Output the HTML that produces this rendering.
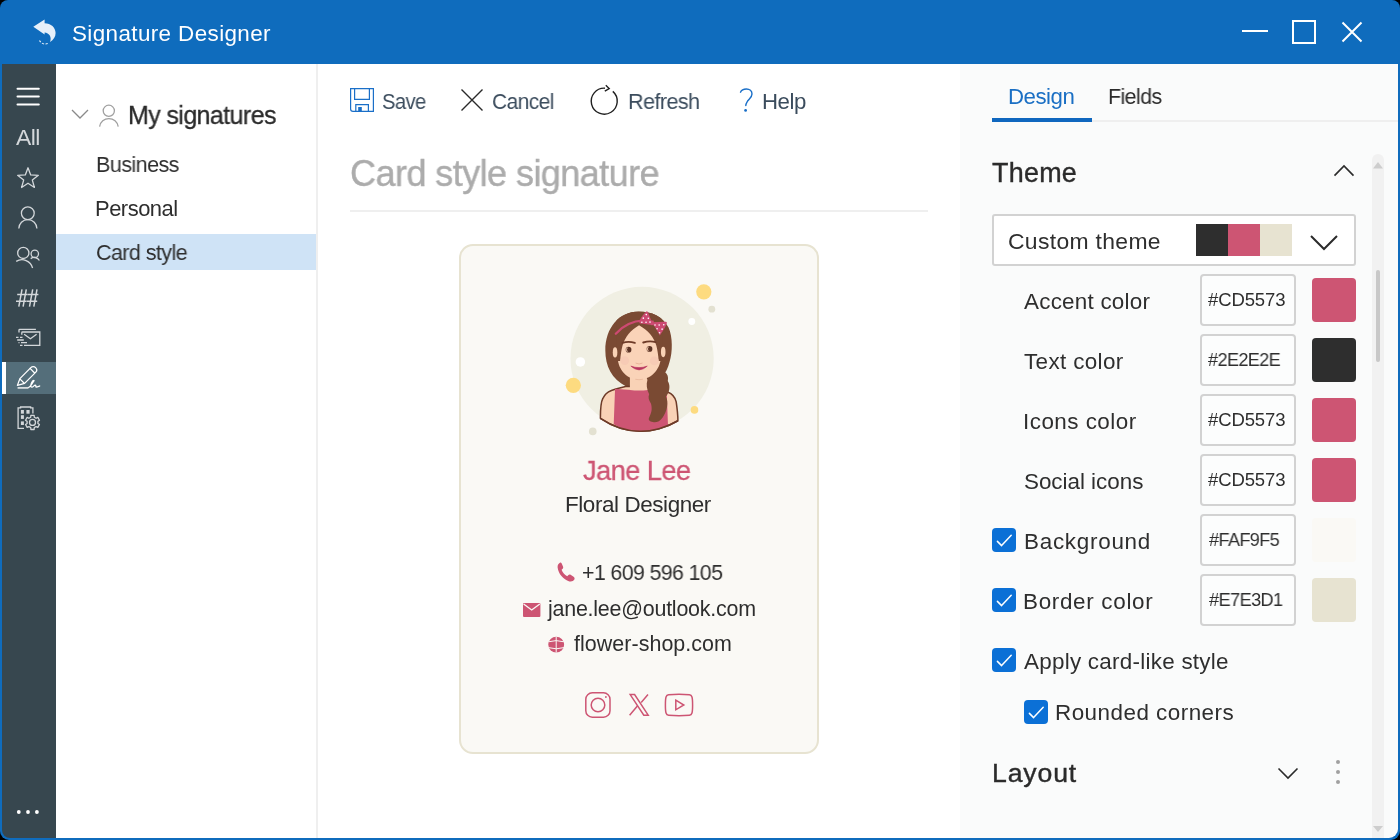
<!DOCTYPE html>
<html><head><meta charset="utf-8"><title>Signature Designer</title>
<style>
html,body{margin:0;padding:0;width:1400px;height:840px;overflow:hidden;background:#000;}
body{position:relative;font-family:"Liberation Sans",sans-serif;}
.t{position:absolute;white-space:nowrap;font-family:"Liberation Sans",sans-serif;will-change:transform;}
.a{position:absolute;}
svg{position:absolute;overflow:visible;}
</style></head><body>
<!-- window frame -->
<div class="a" style="left:0;top:0;width:1400px;height:840px;border-radius:8px 8px 9px 9px;background:#0f6cbd;overflow:hidden;">
  <div class="a" style="left:2px;top:64px;width:54px;height:774px;background:#37474f;border-bottom-left-radius:8px;"></div>
  <div class="a" style="left:56px;top:64px;width:260px;height:774px;background:#ffffff;"></div>
  <div class="a" style="left:316px;top:64px;width:2px;height:774px;background:#efefef;"></div>
  <div class="a" style="left:318px;top:64px;width:642px;height:774px;background:#ffffff;"></div>
  <div class="a" style="left:960px;top:64px;width:438px;height:774px;background:#fafbfb;border-bottom-right-radius:9px;"></div>
</div>

<!-- title bar logo -->
<svg style="left:0;top:0" width="100" height="64" viewBox="0 0 100 64">
  <path d="M33.3,26.8 L44.6,19.6 L44.6,23.2 C51,23.2 55.6,27.6 55.6,33 C55.6,36.8 53.6,39.8 50,42 C51.4,38.6 50.6,35 47.6,33.4 C46.6,32.8 45.6,32.6 44.6,32.6 L44.6,34.6 Z" fill="#e6f0fa"/>
  <path d="M39.5,40.5 A6.5,6.5 0 0 0 48.5,43.2" fill="none" stroke="#e6f0fa" stroke-width="1.1" stroke-dasharray="2.2 1.4"/>
</svg>
<!-- window controls -->
<svg style="left:1230px;top:10px" width="150" height="44" viewBox="1230 10 150 44">
  <rect x="1242" y="30" width="26" height="2" fill="#fff"/>
  <rect x="1293" y="21" width="22" height="22" fill="none" stroke="#fff" stroke-width="2"/>
  <path d="M1342.5,22.5 L1361.5,41.5 M1361.5,22.5 L1342.5,41.5" stroke="#fff" stroke-width="2" fill="none"/>
</svg>

<!-- sidebar icons -->
<div class="a" style="left:2px;top:362px;width:54px;height:32px;background:#546e7a;"></div>
<div class="a" style="left:2px;top:362px;width:4px;height:32px;background:#ffffff;"></div>
<svg style="left:0;top:64px" width="56" height="774" viewBox="0 64 56 774">
  <g stroke="#ffffff" stroke-width="2" stroke-linecap="round" fill="none">
    <path d="M17.5,88.8 H38.8 M17.5,96.6 H38.8 M17.5,104.4 H38.8"/>
  </g>
  <g stroke="#d3d7da" stroke-width="1.3" fill="none" stroke-linejoin="miter">
    <path d="M28.00,167.75 L30.69,174.95 L38.37,175.28 L32.35,180.06 L34.41,187.47 L28.00,183.23 L21.59,187.47 L23.65,180.06 L17.63,175.28 L25.31,174.95 Z" stroke-linejoin="round"/>
    <circle cx="27.8" cy="213.3" r="6.4"/>
    <path d="M18.8,228.6 A9.05,9.05 0 0 1 36.9,228.6"/>
    <circle cx="23.3" cy="252.9" r="5.6"/>
    <circle cx="34.8" cy="253.8" r="3.7"/>
    <path d="M16.2,261.4 A11,11 0 0 1 32.6,268"/>
    <path d="M30.7,258.6 A6,6 0 0 1 39.4,260.5"/>
  </g>
  <g stroke="#d3d7da" stroke-width="1.5" fill="none">
    <path d="M22,289.3 L18.8,306.7 M26.3,289.3 L23.1,306.7 M17.2,294.6 H27.7 M16,301.3 H26.5"/>
    <path d="M32.5,289.3 L29.3,306.7 M36.8,289.3 L33.6,306.7 M27.7,294.6 H38.2 M26.5,301.3 H37" transform="translate(0.2,0)"/>
  </g>
  <g stroke="#d3d7da" stroke-width="1.3" fill="none">
    <path d="M19,332.5 V330 Q19,329.3 19.8,329.3 H35.9"/>
    <path d="M21.8,334.8 V332.8 Q21.8,332 22.6,332 H39.8 V345.4 H24"/>
    <path d="M24.1,334.3 L30.4,338.8 L36.6,334.3"/>
    <path d="M16,337.4 H18.5 M20,337.4 H22.5 M17.2,340 H23.8 M18.5,342.6 H19.5 M21,342.6 H27 M20,345.4 H22.5"/>
  </g>
  <g stroke="#ffffff" stroke-width="1.3" fill="none" stroke-linejoin="round" stroke-linecap="round">
    <path d="M17.4,385.4 L19.9,378.6 L30.8,367.6 A3.39,3.39 0 0 1 35.6,372.4 L24.6,383.4 Z"/>
    <path d="M20.1,379.1 L24,383 M30.1,368.4 L34.4,372.7"/>
    <path d="M28.3,387.6 C30,387.4 31,385.5 32.2,383.5 C33.2,381.8 34.6,380.4 33.8,380.4 C32.4,380.4 30.6,384 30.8,386 C31,387.6 32.4,387.4 33.4,386.4 C34.2,385.6 35,384.8 35.6,385.2 C36,385.6 35.6,387 36.2,387 C37,387 38.6,386.4 39.7,386"/>
  </g>
  <path d="M17.6,387.9 H28.3" stroke="#dfe3e5" stroke-width="1.7"/>
  <g stroke="#d3d7da" stroke-width="1.3" fill="none">
    <path d="M24,428.4 H18.1 V407.9 H20.6 V407 H30.6 V407.9 H32.9 V413.5"/>
    <circle cx="32.5" cy="422.4" r="3"/>
    <path d="M30.71,417.20 L30.86,415.29 L34.14,415.29 L34.29,417.20 L36.11,418.25 L37.84,417.42 L39.48,420.27 L37.90,421.35 L37.90,423.45 L39.48,424.53 L37.84,427.38 L36.11,426.55 L34.29,427.60 L34.14,429.51 L30.86,429.51 L30.71,427.60 L28.89,426.55 L27.16,427.38 L25.52,424.53 L27.10,423.45 L27.10,421.35 L25.52,420.27 L27.16,417.42 L28.89,418.25 Z" stroke-linejoin="round"/>
  </g>
  <g fill="#d3d7da">
    <rect x="20.9" y="410" width="3" height="3.7"/><rect x="26.4" y="410" width="3.2" height="3.7"/>
    <rect x="20.9" y="415.2" width="3" height="3.7"/><rect x="20.9" y="421.4" width="3" height="3.6"/>
  </g>
  <g fill="#ffffff">
    <circle cx="18.8" cy="812" r="1.9"/><circle cx="28" cy="812" r="1.9"/><circle cx="36.9" cy="812" r="1.9"/>
  </g>
</svg>

<!-- tree -->
<div class="a" style="left:56px;top:234px;width:260px;height:36px;background:#cfe3f6;"></div>
<svg style="left:60px;top:95px" width="70" height="40" viewBox="60 95 70 40">
  <path d="M72,110 L80,118 L88,110" stroke="#8a8a8a" stroke-width="1.3" fill="none"/>
  <circle cx="108.8" cy="110.8" r="5.6" stroke="#a0a0a0" stroke-width="1.3" fill="none"/>
  <path d="M99.6,126.6 A9.4,9.4 0 0 1 118.2,126.6" stroke="#a0a0a0" stroke-width="1.3" fill="none"/>
</svg>

<!-- toolbar icons -->
<svg style="left:340px;top:80px" width="480" height="40" viewBox="340 80 480 40">
  <g stroke="#1a6fc8" stroke-width="1.2" fill="none">
    <path d="M350.6,88.6 H373.4 V111.4 H353 Q350.6,111.4 350.6,109 Z"/>
    <path d="M354.6,88.6 V99.4 H369.4 V88.6"/>
    <path d="M355.8,111.4 V104.6 H368.4 V111.4"/>
  </g>
  <rect x="358.2" y="107" width="3.6" height="4.6" fill="#1a6fc8"/>
  <path d="M461.5,89.5 L482.5,110.5 M482.5,89.5 L461.5,110.5" stroke="#2a2a2a" stroke-width="1.4" fill="none"/>
  <path d="M612.8,91.4 A13,13 0 1 1 605,88.2" stroke="#1f1f1f" stroke-width="1.4" fill="none"/>
  <path d="M605.8,85.2 L609.2,88.6 L604.8,91.2" stroke="#1f1f1f" stroke-width="1.4" fill="none"/>
  <path d="M740.5,92.2 C741.6,89.6 744,89 746.4,89 C749.6,89 752,91 752,94 C752,97.2 749.2,98.6 747.6,101 C746.6,102.6 745.8,103.6 745.8,105.6" stroke="#1a6fc8" stroke-width="1.4" fill="none" stroke-linecap="round"/>
  <circle cx="745.6" cy="110.4" r="1.4" fill="#1a6fc8"/>
</svg>

<!-- heading separator -->
<div class="a" style="left:350px;top:210px;width:578px;height:2px;background:#efefef;"></div>

<!-- card -->
<div class="a" style="left:459px;top:244px;width:356px;height:506px;border:2px solid #e7e3d1;border-radius:14px;background:#faf9f5;"></div>

<!-- avatar -->
<svg style="left:560px;top:280px" width="160" height="160" viewBox="0 0 840 840">
  <defs><clipPath id="hc"><path d="M413,165 C310,165 238,250 238,370 C238,450 270,520 340,562 L480,562 C520,540 560,490 575,430 C592,380 592,300 570,250 C540,190 480,165 413,165 Z"/></clipPath></defs>
  <circle cx="431" cy="412" r="376" fill="#f0efe3"/>
  <circle cx="755" cy="62" r="40" fill="#fddb80"/>
  <circle cx="797" cy="153" r="18" fill="#e3e1d1"/>
  <circle cx="692" cy="218" r="18" fill="#ffffff"/>
  <circle cx="107" cy="430" r="25" fill="#ffffff"/>
  <circle cx="70" cy="553" r="40" fill="#fddb80"/>
  <circle cx="706" cy="682" r="20" fill="#fddb80"/>
  <circle cx="172" cy="795" r="20" fill="#e3e1d1"/>
  <!-- hair back -->
  <path d="M413,165 C310,165 238,250 238,370 C238,450 270,520 350,560 L480,562 C520,540 560,490 575,430 C592,380 592,300 570,250 C540,190 480,165 413,165 Z" fill="#7a4a33"/>
  <!-- body -->
  <path d="M212,726 C212,680 215,640 225,622 C235,598 250,588 270,580 C300,570 325,565 350,558 L470,565 C500,572 540,580 565,588 C590,598 604,612 610,640 C616,680 619,715 619,739 C560,775 480,795 420,794 C340,793 270,765 212,726 Z" fill="#f9d2b6" stroke="#6e3b28" stroke-width="8" stroke-linejoin="round"/>
  <path d="M289,571 C320,575 350,577 380,577 L464,577 C500,580 535,584 560,586 L567,762 C520,782 470,794 420,794 C370,794 320,780 282,757 Z" fill="#cd5573"/>
  <path d="M212,726 C270,765 340,793 420,794 C480,795 560,775 619,739" fill="none" stroke="#6e3b28" stroke-width="8"/>
  <!-- neck -->
  <path d="M367,480 H462 V577 C430,582 400,582 367,577 Z" fill="#f9d2b6"/>
  <!-- braid -->
  <path d="M462,470 C520,455 578,480 566,530 C582,555 574,592 556,612 C572,640 562,690 540,720 C525,742 505,750 488,746 C470,742 462,735 468,722 C478,700 486,685 478,650 C465,630 462,615 468,600 C455,575 452,545 459,525 C450,505 452,485 462,470 Z" fill="#7a4a33"/>
  <!-- face -->
  <path d="M303,330 C303,262 350,236 415,236 C480,236 528,262 528,330 L530,405 C526,475 472,523 415,523 C358,523 304,475 303,405 Z" fill="#fad3b8"/>
  <path d="M395,521 Q415,526 435,521" fill="none" stroke="#e7b59a" stroke-width="4"/>
  <!-- bangs -->
  <path d="M415,237 C372,262 340,300 328,345 C322,370 318,395 316,425 L296,425 L296,160 L536,160 L536,425 L518,425 C516,395 512,370 506,345 C494,300 460,262 415,237 Z" fill="#7a4a33" clip-path="url(#hc)"/>
  <ellipse cx="289" cy="380" rx="12" ry="27" fill="#f9d2b6"/>
  <ellipse cx="542" cy="378" rx="12" ry="27" fill="#f9d2b6"/>
  <!-- headband -->
  <path d="M293,282 C330,240 380,215 440,212" fill="none" stroke="#cd4a72" stroke-width="12" stroke-linecap="round"/>
  <!-- bow -->
  <path d="M457,163 C440,175 425,195 418,215 C415,222 416,228 422,229 L484,236 C486,225 482,215 476,205 C470,190 465,175 457,163 Z" fill="#cd4a72"/>
  <path d="M484,222 L556,219 C562,219 562,225 560,230 C550,255 535,275 524,292 C518,280 510,265 500,250 C493,240 486,232 484,222 Z" fill="#cd4a72"/>
  <rect x="478" y="213" width="14" height="24" fill="#cd4a72"/>
  <g fill="#ffffff">
    <circle cx="452.8" cy="181.6" r="4.3"/><circle cx="437.5" cy="200.2" r="4.3"/><circle cx="463.8" cy="201.3" r="4.3"/><circle cx="429.8" cy="222" r="4.3"/><circle cx="451.7" cy="222" r="4.3"/><circle cx="472.5" cy="221" r="4.3"/>
    <circle cx="498.8" cy="236.3" r="4.3"/><circle cx="520.6" cy="236.3" r="4.3"/><circle cx="544.7" cy="235.2" r="4.3"/><circle cx="509.7" cy="256" r="4.3"/><circle cx="536" cy="258" r="4.3"/><circle cx="522.8" cy="276.7" r="4.3"/>
  </g>
  <!-- eyebrows -->
  <path d="M328,330 Q360,320 393,330" fill="none" stroke="#6e3b28" stroke-width="10" stroke-linecap="round"/>
  <path d="M437,328 Q470,318 502,326" fill="none" stroke="#6e3b28" stroke-width="10" stroke-linecap="round"/>
  <!-- eyes -->
  <circle cx="360" cy="366" r="15" fill="#5b3325"/>
  <circle cx="470" cy="362" r="15" fill="#5b3325"/>
  <path d="M353,355 Q345,366 353,377" fill="none" stroke="#fad3b8" stroke-width="5"/>
  <path d="M463,351 Q455,362 463,373" fill="none" stroke="#fad3b8" stroke-width="5"/>
  <!-- cheeks -->
  <circle cx="340" cy="423" r="23" fill="#f7cbb5"/>
  <circle cx="495" cy="425" r="23" fill="#f7cbb5"/>
  <path d="M397,436 Q415,446 433,436" fill="none" stroke="#e4ab90" stroke-width="4"/>
  <path d="M372,452 Q415,492 458,452 Q415,468 372,452 Z" fill="#b8365f" stroke="#b8365f" stroke-width="3" stroke-linejoin="round"/>
</svg>

<!-- contact icons -->
<svg style="left:515px;top:550px" width="70" height="110" viewBox="515 550 70 110">
  <path d="M560.2,562.6 C558.4,563.6 557.4,565.4 557.6,567.4 C558.4,573.6 563.2,579.4 569.4,581.4 C571.4,582 573.4,581.2 574.4,579.6 L574.6,578.6 C574.6,577.8 574.2,577.2 573.6,576.8 L570.6,574.8 C569.8,574.4 568.8,574.6 568.2,575.2 L567.2,576.2 C564.6,574.8 562.6,572.4 561.6,569.8 L562.6,568.8 C563.2,568.2 563.4,567.2 563,566.4 L561.6,563.2 C561.2,562.6 560.6,562.4 560.2,562.6 Z" fill="#cd5573"/>
  <rect x="523" y="603" width="17.4" height="14" rx="1" fill="#cd5573"/>
  <path d="M523.6,604 L531.7,610 L539.8,604" fill="none" stroke="#faf9f5" stroke-width="1.4"/>
  <circle cx="556.2" cy="644.7" r="7.9" fill="#cd5573"/>
  <path d="M548.4,641.8 Q556.2,639.4 564,641.8 M548.4,647.6 Q556.2,650 564,647.6 M556.2,636.8 V652.6" fill="none" stroke="#faf9f5" stroke-width="1"/>
</svg>

<!-- social icons -->
<svg style="left:575px;top:680px" width="130" height="50" viewBox="575 680 130 50">
  <g stroke="#cd5573" stroke-width="1.5" fill="none">
    <rect x="585.8" y="692.8" width="24.2" height="24.4" rx="6.5"/>
    <circle cx="598" cy="705" r="6.8"/>
    <path d="M629.6,715.2 L637.6,705.8 M648,694.6 L641.2,702.4"/>
    <path d="M630.2,694.6 H634.6 L648.2,715.2 H643.8 Z"/>
    <path d="M668.6,694.8 C675,694.2 683,694.2 689.4,694.8 C692,695.1 692.6,697 692.6,705 C692.6,713 692,714.9 689.4,715.2 C683,715.8 675,715.8 668.6,715.2 C666,714.9 665.4,713 665.4,705 C665.4,697 666,695.1 668.6,694.8 Z"/>
    <path d="M675.8,700.2 L683.8,705 L675.8,709.8 Z"/>
  </g>
  <circle cx="605.9" cy="697" r="0.9" fill="#cd5573"/>
</svg>

<!-- right panel: tabs -->
<div class="a" style="left:1092px;top:120px;width:306px;height:2px;background:#efefef;"></div>
<div class="a" style="left:992px;top:118px;width:100px;height:4px;background:#0f67bf;"></div>

<!-- theme chevron -->
<svg style="left:1320px;top:150px" width="60" height="650" viewBox="1320 150 60 650">
  <path d="M1334.5,175.6 L1344,166 L1353.5,175.6" stroke="#2b2b2b" stroke-width="1.6" fill="none"/>
</svg>
<svg style="left:1270px;top:750px" width="80" height="40" viewBox="1270 750 80 40">
  <path d="M1278.5,768.5 L1288,778 L1297.5,768.5" stroke="#2b2b2b" stroke-width="1.6" fill="none"/>
  <circle cx="1338" cy="762" r="2" fill="#a0a0a0"/><circle cx="1338" cy="772" r="2" fill="#a0a0a0"/><circle cx="1338" cy="782" r="2" fill="#a0a0a0"/>
</svg>

<!-- dropdown -->
<div class="a" style="left:992px;top:214px;width:360px;height:48px;border:2px solid #d2d2d2;border-radius:3px;background:#ffffff;"></div>
<div class="a" style="left:1196px;top:224px;width:32px;height:32px;background:#2e2e2e;"></div>
<div class="a" style="left:1228px;top:224px;width:32px;height:32px;background:#cd5573;"></div>
<div class="a" style="left:1260px;top:224px;width:32px;height:32px;background:#e7e3d1;"></div>
<svg style="left:1300px;top:225px" width="50" height="35" viewBox="1300 225 50 35">
  <path d="M1311,236 L1324,249 L1337,236" stroke="#2b2b2b" stroke-width="2" fill="none"/>
</svg>

<!-- color rows -->
<div class="a" style="left:1200px;top:274px;width:92px;height:48px;border:2px solid #d2d2d2;border-radius:4px;background:#fcfdfd;"></div>
<div class="a" style="left:1312px;top:278px;width:44px;height:44px;border-radius:4px;background:#cd5573;"></div>
<div class="a" style="left:1200px;top:334px;width:92px;height:48px;border:2px solid #d2d2d2;border-radius:4px;background:#fcfdfd;"></div>
<div class="a" style="left:1312px;top:338px;width:44px;height:44px;border-radius:4px;background:#2e2e2e;"></div>
<div class="a" style="left:1200px;top:394px;width:92px;height:48px;border:2px solid #d2d2d2;border-radius:4px;background:#fcfdfd;"></div>
<div class="a" style="left:1312px;top:398px;width:44px;height:44px;border-radius:4px;background:#cd5573;"></div>
<div class="a" style="left:1200px;top:454px;width:92px;height:48px;border:2px solid #d2d2d2;border-radius:4px;background:#fcfdfd;"></div>
<div class="a" style="left:1312px;top:458px;width:44px;height:44px;border-radius:4px;background:#cd5573;"></div>
<div class="a" style="left:1200px;top:514px;width:92px;height:48px;border:2px solid #d2d2d2;border-radius:4px;background:#fcfdfd;"></div>
<div class="a" style="left:1312px;top:518px;width:44px;height:44px;border-radius:4px;background:#faf9f5;"></div>
<div class="a" style="left:1200px;top:574px;width:92px;height:48px;border:2px solid #d2d2d2;border-radius:4px;background:#fcfdfd;"></div>
<div class="a" style="left:1312px;top:578px;width:44px;height:44px;border-radius:4px;background:#e7e3d1;"></div>

<!-- checkboxes -->
<div class="a" style="left:992px;top:528px;width:24px;height:24px;border-radius:4px;background:#0b70d6;"></div>
<div class="a" style="left:992px;top:588px;width:24px;height:24px;border-radius:4px;background:#0b70d6;"></div>
<div class="a" style="left:992px;top:648px;width:24px;height:24px;border-radius:4px;background:#0b70d6;"></div>
<div class="a" style="left:1024px;top:700px;width:24px;height:24px;border-radius:4px;background:#0b70d6;"></div>
<svg style="left:990px;top:520px" width="70" height="210" viewBox="990 520 70 210">
  <g stroke="#ffffff" stroke-width="1.5" fill="none" stroke-linecap="round" stroke-linejoin="round">
    <path d="M997.4,541.4 L1001.6,545.6 L1011.2,535.2"/>
    <path d="M997.4,601.4 L1001.6,605.6 L1011.2,595.2"/>
    <path d="M997.4,661.4 L1001.6,665.6 L1011.2,655.2"/>
    <path d="M1029.4,713.4 L1033.6,717.6 L1043.2,707.2"/>
  </g>
</svg>

<!-- scrollbar -->
<div class="a" style="left:1372px;top:154px;width:12px;height:684px;background:#f1f1f1;border-radius:6px 6px 0 0;"></div>
<div class="a" style="left:1376px;top:270px;width:4px;height:92px;background:#c8c8c8;border-radius:2px;"></div>
<svg style="left:1370px;top:155px" width="16" height="680" viewBox="1370 155 16 680">
  <path d="M1373,168.5 L1378,162 L1383,168.5 Z" fill="#cdcdcd"/>
  <path d="M1373,826 L1378,832 L1383,826 Z" fill="#cdcdcd"/>
</svg>

<div class="t" style="left:71.90px;top:22.71px;font-size:22.43px;line-height:22.43px;letter-spacing:0.388px;color:#ffffff">Signature Designer</div>
<div class="t" style="left:15.80px;top:126.41px;font-size:22.91px;line-height:22.91px;letter-spacing:-0.600px;color:#d3d7da;transform:scaleX(0.9802);transform-origin:0 0">All</div>
<div class="t" style="left:127.55px;top:102.84px;font-size:25.35px;line-height:25.35px;letter-spacing:-0.600px;color:#2b2b2b;transform:scaleX(0.9857);transform-origin:0 0;-webkit-text-stroke:0.3px #2b2b2b">My signatures</div>
<div class="t" style="left:95.51px;top:154.13px;font-size:21.94px;line-height:21.94px;letter-spacing:-0.600px;color:#2e2e2e;transform:scaleX(0.9839);transform-origin:0 0">Business</div>
<div class="t" style="left:95.49px;top:198.23px;font-size:21.94px;line-height:21.94px;letter-spacing:-0.490px;color:#2e2e2e">Personal</div>
<div class="t" style="left:95.99px;top:242.13px;font-size:21.94px;line-height:21.94px;letter-spacing:-0.600px;color:#2e2e2e;transform:scaleX(0.9809);transform-origin:0 0">Card style</div>
<div class="t" style="left:382.27px;top:91.08px;font-size:22.23px;line-height:22.23px;letter-spacing:-0.600px;color:#3b4c5d;transform:scaleX(0.9054);transform-origin:0 0">Save</div>
<div class="t" style="left:492.32px;top:91.28px;font-size:22.23px;line-height:22.23px;letter-spacing:-0.600px;color:#3b4c5d;transform:scaleX(0.9421);transform-origin:0 0">Cancel</div>
<div class="t" style="left:628.01px;top:90.98px;font-size:22.23px;line-height:22.23px;letter-spacing:-0.600px;color:#3b4c5d;transform:scaleX(0.9726);transform-origin:0 0">Refresh</div>
<div class="t" style="left:762.16px;top:91.08px;font-size:22.23px;line-height:22.23px;letter-spacing:-0.427px;color:#3b4c5d">Help</div>
<div class="t" style="left:350.01px;top:154.94px;font-size:37.05px;line-height:37.05px;letter-spacing:-0.600px;color:#acacac;transform:scaleX(0.9732);transform-origin:0 0;-webkit-text-stroke:0.4px #acacac">Card style signature</div>
<div class="t" style="left:583.07px;top:457.23px;font-size:28.08px;line-height:28.08px;letter-spacing:-0.600px;color:#cd5573;transform:scaleX(0.9703);transform-origin:0 0;-webkit-text-stroke:0.3px #cd5573">Jane Lee</div>
<div class="t" style="left:564.75px;top:493.81px;font-size:22.43px;line-height:22.43px;letter-spacing:-0.409px;color:#2e2e2e">Floral Designer</div>
<div class="t" style="left:581.90px;top:563.34px;font-size:21.45px;line-height:21.45px;letter-spacing:-0.600px;color:#2e2e2e;transform:scaleX(0.9941);transform-origin:0 0">+1 609 596 105</div>
<div class="t" style="left:548.17px;top:598.54px;font-size:21.45px;line-height:21.45px;letter-spacing:-0.233px;color:#2e2e2e">jane.lee@outlook.com</div>
<div class="t" style="left:573.60px;top:634.24px;font-size:21.45px;line-height:21.45px;letter-spacing:0.047px;color:#2e2e2e">flower-shop.com</div>
<div class="t" style="left:1007.56px;top:86.18px;font-size:22.23px;line-height:22.23px;letter-spacing:-0.482px;color:#1a6fc4">Design</div>
<div class="t" style="left:1107.63px;top:86.18px;font-size:22.23px;line-height:22.23px;letter-spacing:-0.600px;color:#2b2b2b;transform:scaleX(0.9616);transform-origin:0 0">Fields</div>
<div class="t" style="left:992.18px;top:160.22px;font-size:26.91px;line-height:26.91px;letter-spacing:0.265px;color:#2b2b2b;-webkit-text-stroke:0.4px #2b2b2b">Theme</div>
<div class="t" style="left:1007.83px;top:229.71px;font-size:22.91px;line-height:22.91px;letter-spacing:0.330px;color:#2e2e2e">Custom theme</div>
<div class="t" style="left:1024.10px;top:291.01px;font-size:22.43px;line-height:22.43px;letter-spacing:0.235px;color:#2e2e2e">Accent color</div>
<div class="t" style="left:1208.20px;top:291.32px;font-size:18.52px;line-height:18.52px;letter-spacing:-0.116px;color:#2e2e2e">#CD5573</div>
<div class="t" style="left:1024.05px;top:351.01px;font-size:22.43px;line-height:22.43px;letter-spacing:0.364px;color:#2e2e2e">Text color</div>
<div class="t" style="left:1208.10px;top:351.32px;font-size:18.52px;line-height:18.52px;letter-spacing:-0.600px;color:#2e2e2e;transform:scaleX(0.9746);transform-origin:0 0">#2E2E2E</div>
<div class="t" style="left:1023.25px;top:411.01px;font-size:22.43px;line-height:22.43px;letter-spacing:0.470px;color:#2e2e2e">Icons color</div>
<div class="t" style="left:1208.20px;top:411.32px;font-size:18.52px;line-height:18.52px;letter-spacing:-0.116px;color:#2e2e2e">#CD5573</div>
<div class="t" style="left:1023.70px;top:471.01px;font-size:22.43px;line-height:22.43px;letter-spacing:-0.026px;color:#2e2e2e">Social icons</div>
<div class="t" style="left:1208.20px;top:471.32px;font-size:18.52px;line-height:18.52px;letter-spacing:-0.116px;color:#2e2e2e">#CD5573</div>
<div class="t" style="left:1023.55px;top:531.01px;font-size:22.43px;line-height:22.43px;letter-spacing:0.734px;color:#2e2e2e">Background</div>
<div class="t" style="left:1208.60px;top:531.32px;font-size:18.52px;line-height:18.52px;letter-spacing:-0.600px;color:#2e2e2e;transform:scaleX(0.9747);transform-origin:0 0">#FAF9F5</div>
<div class="t" style="left:1023.25px;top:591.01px;font-size:22.43px;line-height:22.43px;letter-spacing:0.690px;color:#2e2e2e">Border color</div>
<div class="t" style="left:1208.60px;top:591.32px;font-size:18.52px;line-height:18.52px;letter-spacing:-0.600px;color:#2e2e2e;transform:scaleX(0.9796);transform-origin:0 0">#E7E3D1</div>
<div class="t" style="left:1024.30px;top:651.31px;font-size:22.43px;line-height:22.43px;letter-spacing:0.258px;color:#2e2e2e">Apply card-like style</div>
<div class="t" style="left:1055.35px;top:702.01px;font-size:22.43px;line-height:22.43px;letter-spacing:0.477px;color:#2e2e2e">Rounded corners</div>
<div class="t" style="left:991.72px;top:760.47px;font-size:26.62px;line-height:26.62px;letter-spacing:0.873px;color:#2b2b2b;-webkit-text-stroke:0.4px #2b2b2b">Layout</div>
</body></html>
